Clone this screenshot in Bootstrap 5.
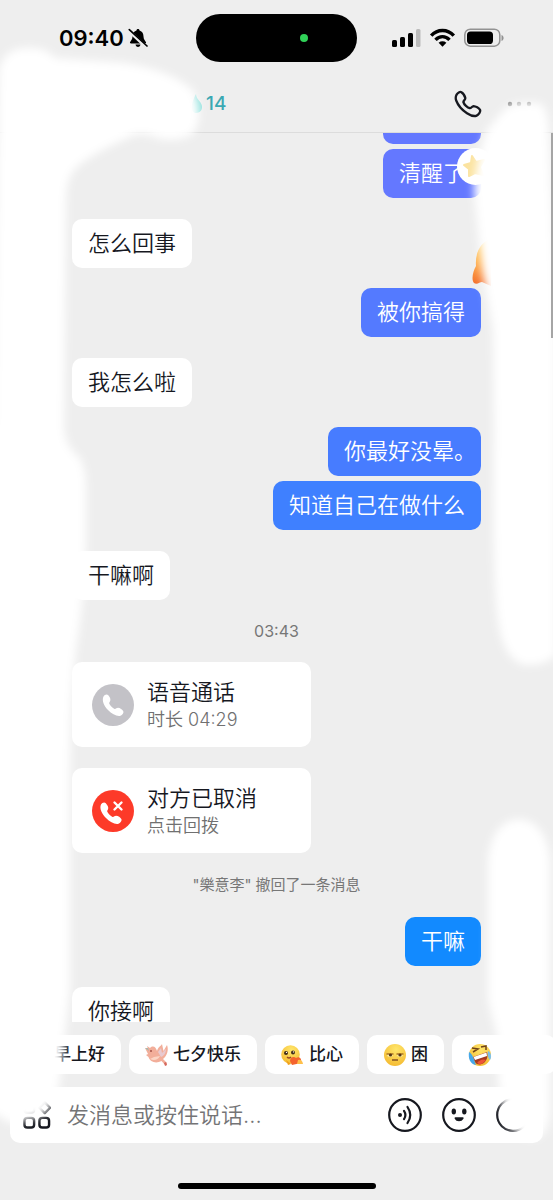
<!DOCTYPE html>
<html lang="zh-CN">
<head>
<meta charset="utf-8">
<meta name="viewport" content="width=device-width, initial-scale=1">
<title>聊天</title>
<link href="https://cdn.jsdelivr.net/npm/bootstrap@5.3.0/dist/css/bootstrap.min.css" rel="stylesheet">
<style>
  body { background: #eee; color: #16181f; font-family: Inter, "Noto Sans CJK SC", sans-serif; }
  svg { display: block; flex: none; }
  .screen { height: 100vh; }
  .status { height: 76px; padding: 0 49px 0 59px; }
  .clock { font-size: 22px; line-height: 28px; font-weight: 600; color: #000; }
  .island { width: 161px; height: 48px; left: 50%; margin-left: -81px; top: 14px; background: #000; padding-right: 49px; }
  .camera-dot { width: 8px; height: 8px; background: #30d158; }
  .topbar { height: 57px; padding: 0 21px 0 190px; border-bottom: 1px solid #dcdcdc; }
  .streak { font-size: 19px; line-height: 24px; font-weight: 500; color: #3aa8b3; }
  .plain { border: 0; background: none; padding: 0; color: #16181f; }
  .thread { min-height: 0; }
  .messages { padding: 0 72px; margin-top: -38px; }
  .bubble { font-size: 22px; line-height: 33px; font-weight: 350; padding: 8px 16px; border-radius: 10px; white-space: nowrap; background: #fff; align-self: flex-start; font-feature-settings: "halt"; }
  .mine { align-self: flex-end; color: #fff; }
  .g1 { background: #6478ff; } .g2 { background: #547aff; } .g3 { background: #477cff; }
  .g4 { background: #3f80ff; } .g5 { background: #128aff; }
  .gap-same { margin-top: 5px; } .gap-in { margin-top: 21px; } .gap-out { margin-top: 20px; }
  .stamp { font-size: 16px; line-height: 24px; padding: 19px 0; color: #777; }
  .notice { font-size: 15px; line-height: 24px; padding: 20px 0; color: #777; }
  .call { width: 239px; height: 85px; border: 0; padding: 0 20px; gap: 13px; border-radius: 10px; background: #fff; color: #16181f; text-align: left; }
  .call-title { font-size: 22px; line-height: 30px; font-weight: 350; }
  .call-sub { font-size: 18px; line-height: 26px; font-weight: 350; color: #707070; }
  .star { left: 74px; top: -1px; }
  .flame { right: -10px; top: -50px; }
  .scroll-thumb { width: 2px; height: 205px; background: #a5a5a5; right: 0; top: 0; z-index: 3; }
  .dock { padding: 13px 0 11px; }
  .chips { gap: 8px; padding-left: 10px; }
  .chip { flex: none; height: 39px; border: 0; padding: 0 16px; gap: 4px; border-radius: 10px; background: #fff; font-size: 17px; font-weight: 500; color: #16181f; white-space: nowrap; }
  .chip-wide { width: 104px; }
  .composer { margin: 13px 10px 40px; height: 56px; padding: 0 11px 0 13px; border-radius: 10px; background: #fff; }
  .composer input { border: 0; outline: 0; background: none; font-size: 22px; line-height: 32px; font-weight: 350; padding: 0; min-width: 0; }
  .composer input::placeholder { color: #747476; opacity: 1; }
  .home { width: 198px; height: 6px; background: #000; }
  .fog { pointer-events: none; z-index: 2; }
</style>
</head>
<body>
<main class="screen position-relative d-flex flex-column overflow-hidden">
  <div class="status flex-shrink-0 d-flex align-items-center justify-content-between position-relative">
    <div class="d-flex align-items-center gap-1">
      <span class="clock">09:40</span>
      <svg width="20" height="20" viewBox="0 0 20 20" aria-label="静音"><path d="M10 1C9 1 8.600 1.600 8.500 2.400 5.500 3.200 4.600 5.600 4.500 8.500 4.400 11.500 3 12.600 2 14.200 1.800 15 2.200 15.400 3 15.400H17C17.800 15.400 18.200 15 18 14.200 17 12.600 15.600 11.500 15.500 8.500 15.400 5.600 14.500 3.200 11.500 2.400 11.400 1.600 11 1 10 1Z M7.500 16.600H12.500C12 18.400 11 19 10 19S8 18.400 7.500 16.600Z" fill="#000"/><path d="M.5 2.500 18.300 19" stroke="#eee" stroke-width="3.400"/><path d="M1.300 1.600 19 18" stroke="#000" stroke-width="1.700" stroke-linecap="round"/></svg>
    </div>
    <div class="island position-absolute rounded-pill d-flex align-items-center justify-content-end"><span class="camera-dot rounded-circle"></span></div>
    <div class="d-flex align-items-center">
      <svg width="29" height="20" viewBox="0 0 29 20"><rect x="0" y="12" width="5" height="7" rx="1.500"/><rect x="8" y="9" width="5" height="10" rx="1.500"/><rect x="16" y="5" width="5" height="14" rx="1.500"/><rect x="24" y="1" width="4.500" height="18" rx="1.500" fill="#bbb"/></svg>
      <svg class="ms-2 me-2" width="27" height="20" viewBox="0 0 27 20"><g fill="none" stroke="#000" stroke-width="3.400"><path d="M2.200 7.600C8.500 .8 18.500 .8 24.800 7.600"/><path d="M6.500 11.800C10.500 7.600 16.500 7.600 20.500 11.800"/></g><path d="M9.600 14.700C12 12.800 15 12.800 17.400 14.700L13.500 18.800Z"/></svg>
      <svg width="40" height="20" viewBox="0 0 40 20"><rect x=".8" y="1.200" width="35" height="17" rx="5.500" fill="none" stroke="#929292" stroke-width="1.500"/><rect x="3" y="3.500" width="26" height="12.500" rx="3.600"/><path d="M37.500 7C40.300 8 40.300 12 37.500 13Z" fill="#929292"/></svg>
    </div>
  </div>

  <header class="topbar flex-shrink-0 d-flex align-items-center justify-content-between">
    <div class="streak d-flex align-items-center">
      <svg width="16" height="22" viewBox="0 0 16 22"><path d="M6 1C6 7 13 9 12 15 11.500 19 8 20 5 20 0 18 1 10 6 1Z" fill="#8fe0dc"/></svg>14
    </div>
    <div class="d-flex align-items-center">
      <button class="plain" type="button" aria-label="语音通话"><svg width="28" height="28" viewBox="0 0 28 28" fill="none" stroke="#16181f" stroke-width="2.300" stroke-linejoin="round"><path d="M2.600 4.600C3.500 2.900 6 1.300 7.400 2.200 9.500 3.600 11 6 11.300 8 11.500 9.600 9.300 10.800 9.400 12.100 10 14.500 13.500 17.700 15.800 18.200 17.200 18.400 17.900 16.200 19.500 16.100 21.700 16.200 25 18 26 19.900 26.900 21.600 24.600 24.600 22.600 25.600 20 26.700 16.400 25.400 13 23.200 8 20 4 15.300 2.200 10.500 1.400 8.300 1.600 6.400 2.600 4.600Z"/></svg></button>
      <button class="plain ms-4" type="button" aria-label="更多"><svg width="26" height="10" viewBox="0 0 26 10" fill="#8a8a8a"><circle cx="4" cy="5" r="2.200"/><circle cx="13" cy="5" r="2.200" opacity=".8"/><circle cx="23" cy="5" r="2.200"/></svg></button>
    </div>
  </header>

  <section class="thread flex-fill position-relative overflow-hidden">
    <div class="messages d-flex flex-column">
      <div class="bubble mine g1" aria-hidden="true"><svg width="66" height="33"></svg></div>
      <div class="bubble mine g1 gap-same position-relative">清醒了
        <svg class="star position-absolute" width="37" height="37" viewBox="0 0 37 37"><circle cx="18.500" cy="18.500" r="18.500" fill="#fff"/><path d="M15 8 19 14 27 12 23 19 26 27 18 25 12 28 12 21 7 17 14 15Z" fill="#fbe3a0" stroke="#fbe3a0" stroke-width="2" stroke-linejoin="round"/></svg>
      </div>
      <div class="bubble gap-in">怎么回事</div>
      <div class="bubble mine g2 gap-out position-relative">被你搞得
        <svg class="flame position-absolute" width="19" height="48" viewBox="0 0 19 48"><defs><linearGradient id="fire" x1="0" y1="0" x2="0" y2="1"><stop offset="0" stop-color="#ffd768"/><stop offset=".5" stop-color="#ffac45"/><stop offset="1" stop-color="#f26a2b"/></linearGradient></defs><path d="M19 0C8 5 3 15 4 28 1 33-1 42 2 45 5 47 8 44 10 44L19 48Z" fill="url(#fire)"/></svg>
      </div>
      <div class="bubble gap-in">我怎么啦</div>
      <div class="bubble mine g3 gap-out">你最好没晕。</div>
      <div class="bubble mine g4 gap-same">知道自己在做什么</div>
      <div class="bubble gap-in">干嘛啊</div>
      <time class="stamp text-center">03:43</time>
      <button class="call d-flex align-items-center" type="button">
        <svg width="42" height="42" viewBox="0 0 42 42"><circle cx="21" cy="21" r="21" fill="#c3c2c7"/><path d="M11.500 12.500C12.500 10.500 15 9.800 16.300 11.200 18 13 18.700 15 18.300 16.500 18 17.800 16.800 18.600 17.300 19.800 18.300 22 20.500 24 22.600 24.900 23.700 25.200 24.600 23.800 26 23.800 28 23.800 30.500 25.700 31.300 27.300 32 29 30.400 31 28.500 31.700 25 32.600 20 30.100 16 26 12 22 9.600 16.500 11.500 12.500Z" fill="#fff"/></svg>
        <span class="d-flex flex-column"><span class="call-title">语音通话</span><span class="call-sub">时长 04:29</span></span>
      </button>
      <button class="call gap-in d-flex align-items-center" type="button">
        <svg width="42" height="42" viewBox="0 0 42 42"><circle cx="21" cy="21" r="21" fill="#fd3a29"/><path d="M9 14.500C10 12.500 12.500 11.800 13.800 13.200 15.500 15 16.500 17 16.200 18.500 16 19.800 14.800 20.600 15.300 21.800 16.300 24 18.500 26 20.600 26.900 21.700 27.200 22.600 25.800 24 25.800 26 25.800 28.700 27.500 29.500 29.300 30 31 28.400 33 26.500 33.700 23 34.600 18 32.100 14 28 10 24 7.100 18.500 9 14.500Z" fill="#fff"/><path d="M22.500 12.500 29.500 19.500M29.500 12.500 22.500 19.500" stroke="#fff" stroke-width="2.400" stroke-linecap="round"/></svg>
        <span class="d-flex flex-column"><span class="call-title">对方已取消</span><span class="call-sub">点击回拨</span></span>
      </button>
      <div class="notice text-center">"樂意李" 撤回了一条消息</div>
      <div class="bubble mine g5">干嘛</div>
      <div class="bubble gap-in">你接啊</div>
    </div>
    <div class="scroll-thumb position-absolute"></div>
  </section>

  <footer class="dock flex-shrink-0">
    <div class="chips d-flex overflow-hidden">
      <button class="chip d-flex align-items-center" type="button"><svg width="24" height="24"></svg>早上好</button>
      <button class="chip d-flex align-items-center" type="button">
        <svg width="24" height="24" viewBox="0 0 24 24"><path d="M12 8C13 4 16 3 17 1L18.500 8 22 2C24 7 22 13 18 16L22 20 21 23 16.500 18C11 21 5 19 3.500 14L1 12 3 11 0 5 3 6 2 3 5 5C8 2 11 4 12 8Z" fill="#f2ae9a"/><path d="M13 9 16 5 17 10 21 6C21 10 19 13 16 14Z" fill="#e8c9d0"/><path d="M5 16C9 18 13 17 15 13L9 14Z" fill="#fbd5c5"/><path d="M19 20 21 19 22 22 20 23Z" fill="#d4685e"/><path d="M0 5 3 5 4 8Z" fill="#a6b9b0"/><circle cx="6" cy="8" r="1" fill="#a65348"/></svg>七夕快乐</button>
      <button class="chip d-flex align-items-center" type="button">
        <svg width="24" height="24" viewBox="0 0 24 24"><defs><radialGradient id="sun" cx=".55" cy=".25" r=".8"><stop offset="0" stop-color="#ffe66b"/><stop offset="1" stop-color="#f4b92f"/></radialGradient></defs><circle cx="9.500" cy="11.500" r="9.300" fill="url(#sun)"/><circle cx="5" cy="10" r="2" fill="#402c18"/><circle cx="12" cy="9.500" r="2" fill="#402c18"/><circle cx="5.500" cy="9.400" r=".7" fill="#fff"/><circle cx="12.500" cy="8.900" r=".7" fill="#fff"/><path d="M6 14Q8 16 10 14" stroke="#9a4a20" stroke-width="1.400" fill="none"/><path d="M9 18C9 14 13 13 15 15 18 13 21 15 20 20L11 22Z" fill="#f4632e"/><path d="M17 17Q21 16 22 21L16 21Z" fill="#ffc04a"/><path d="M5 17 10 21 7 22Z" fill="#f1a11c"/></svg>比心</button>
      <button class="chip d-flex align-items-center" type="button">
        <svg width="24" height="24" viewBox="0 0 24 24"><circle cx="12" cy="12" r="11" fill="url(#sun)"/><path d="M4 11H10Q10 14 7 14T4 11ZM14 11H20Q20 14 17 14T14 11Z" fill="#fff1a6"/><path d="M3.500 11H10.500M13.500 11H20.500" stroke="#ac7626" stroke-width="1.700"/><circle cx="7.500" cy="12" r="1.600" fill="#573816"/><circle cx="17" cy="12" r="1.600" fill="#573816"/><path d="M9 17H15" stroke="#8b5922" stroke-width="1.600"/></svg>困</button>
      <button class="chip chip-wide d-flex align-items-center" type="button" aria-label="笑哭">
        <svg width="24" height="24" viewBox="0 0 24 24"><circle cx="12" cy="12" r="11" fill="url(#sun)"/><path d="M5 14 19 9C21 15 17 21 12 21.500 8 22 6 18 5 14Z" fill="#a43a20"/><path d="M5.500 14 18.500 9.500 19 13 7 17Z" fill="#fff"/><path d="M9 20Q13 15 18 17 15 21 12 21.500Z" fill="#ee5538"/><path d="M4 5 10 6 5 9M13 4 18 3 18 7" stroke="#704319" stroke-width="1.500" fill="none"/><path d="M1 9C5 11 6 17 8 22 2 21 0 15 1 9Z" fill="#46a8ea"/><path d="M20 8C23 9 24 14 22 17 20 15 19 11 20 8Z" fill="#79bfe8"/></svg></button>
    </div>
    <form class="composer d-flex align-items-center">
      <button class="plain" type="button" aria-label="更多功能"><svg width="28" height="28" viewBox="0 0 29 29" fill="none" stroke="#16181f" stroke-width="2.500"><rect x="1.500" y="2" width="10" height="10" rx="3"/><path d="M22.500 1.500 28 7 22.500 12.500 17 7Z" stroke-linejoin="round"/><rect x="1.500" y="17.500" width="10" height="10" rx="3"/><rect x="17" y="17.500" width="10" height="10" rx="3"/></svg></button>
      <input class="flex-fill ms-3 me-2" type="text" aria-label="消息" placeholder="发消息或按住说话...">
      <div class="d-flex flex-shrink-0 gap-3">
        <button class="plain" type="button" aria-label="语音"><svg width="38" height="36" viewBox="0 0 38 36" fill="none" stroke="#16181f" stroke-width="2.200"><circle cx="19" cy="18" r="15.800"/><circle cx="14" cy="18" r="2" fill="#16181f" stroke="none"/><path d="M18 13.800Q20.800 18 18 22.200M21.500 10Q27 18 21.500 26" stroke-linecap="round"/></svg></button>
        <button class="plain" type="button" aria-label="表情"><svg width="38" height="36" viewBox="0 0 38 36"><circle cx="19" cy="18" r="15.800" fill="none" stroke="#16181f" stroke-width="2.200"/><ellipse cx="13.800" cy="14.500" rx="2.200" ry="3" fill="#16181f"/><ellipse cx="24.300" cy="14.500" rx="2.200" ry="3" fill="#16181f"/><path d="M15.500 20.300H22.700Q24 20.300 23.500 21.700 22 24.300 19 24.300T14.700 21.700Q14.300 20.300 15.500 20.300Z" fill="#16181f"/></svg></button>
        <button class="plain" type="button" aria-label="添加"><svg width="38" height="36" viewBox="0 0 38 36" fill="none" stroke="#16181f" stroke-width="2.200"><circle cx="19" cy="18" r="15.800"/></svg></button>
      </div>
    </form>
    <div class="home rounded-pill mx-auto"></div>
  </footer>

  <svg class="fog position-absolute top-0 start-0 w-100 h-100" viewBox="0 0 553 1200" preserveAspectRatio="none" aria-hidden="true">
    <defs><filter id="soft" x="-20%" y="-5%" width="140%" height="110%"><feGaussianBlur stdDeviation="4"/></filter></defs>
    <g fill="#fff" filter="url(#soft)">
      <path d="M-1 70Q4 49 25 48Q45 46 55 58L125 63Q170 70 193 90Q205 115 193 134Q180 142 160 139Q140 130 128 138Q95 152 78 166Q66 176 66 200L64 430Q66 447 78 456Q86 465 86 490V545Q84 600 76 650Q70 700 70 780V990L62 1060L60 1080Q57 1104 42 1116L12 1124L-12 1110V440L-6 420Z"/>
      <path d="M502 112Q512 100 540 103Q549 108 549 140L556 300V655Q545 666 525 665Q503 660 498 620Q492 580 494 430L493 330Q488 300 482 270L474 190Q476 160 487 130Z"/>
      <path d="M488 860Q492 820 520 819Q546 822 550 860V1110Q549 1135 535 1138H524L506 1125L500 1095L498 1075V1040L488 1000Z"/>
    </g>
  </svg>
</main>
<script src="https://cdn.jsdelivr.net/npm/bootstrap@5.3.0/dist/js/bootstrap.bundle.min.js"></script>
</body>
</html>
